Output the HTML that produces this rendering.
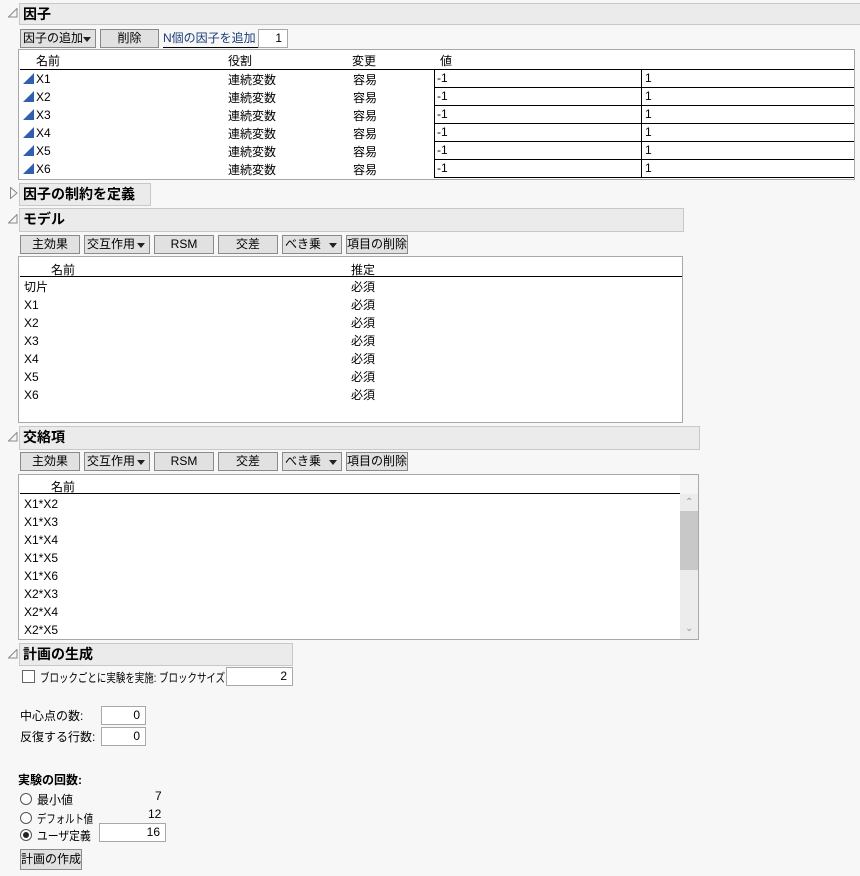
<!DOCTYPE html>
<html><head><meta charset="utf-8">
<style>
*{box-sizing:border-box;margin:0;padding:0}
body{width:860px;height:876px;background:#f7f7f7;position:relative;overflow:hidden;font-family:"Liberation Sans","Noto Sans CJK JP",sans-serif;font-size:12px;color:#000}
.a{position:absolute;white-space:nowrap}
.hdr{position:absolute;background:#ebebeb;border:1px solid #c8c8c8;font-weight:bold;font-size:14px;padding-left:3px;line-height:20px}
.btn{position:absolute;background:#e1e1e1;border:1px solid #8a8a8a;height:19px;line-height:17px;text-align:center;font-size:12px}
.btn.dd{text-align:left;padding-left:2px}
.btn.dd:after{content:"";position:absolute;right:4px;top:7px;border-left:4px solid transparent;border-right:4px solid transparent;border-top:5px solid #222}
.box{position:absolute;background:#fff;border:1px solid #a8a8a8}
.inp{position:absolute;background:#fff;border:1px solid #a8a8a8;height:19px;line-height:17px;text-align:right;padding-right:5px}
.ic{position:absolute;width:0;height:0;border-left:11px solid transparent;border-bottom:11px solid #2f5fae}
.sq{transform-origin:0 0}
</style></head><body>

<svg class="a" style="left:8px;top:8px" width="10" height="10"><path d="M9 0.5 L9 9 L0.5 9 Z" fill="none" stroke="#888"/></svg>
<div class="hdr" style="left:19px;top:3px;width:845px;height:22px">因子</div>
<div class="btn dd" style="left:20px;top:29px;width:76px">因子の追加</div>
<div class="btn" style="left:100px;top:29px;width:59px">削除</div>
<div class="a" style="left:163px;top:30px;line-height:17px;color:#1c3e7a;border-bottom:1px solid #000;width:95px">N個の因子を追加</div>
<div class="inp" style="left:258px;top:29px;width:30px">1</div>

<div class="box" style="left:18px;top:49px;width:837px;height:131px"></div>
<div class="a" style="left:36px;top:52px">名前</div>
<div class="a" style="left:228px;top:52px">役割</div>
<div class="a" style="left:352px;top:52px">変更</div>
<div class="a" style="left:440px;top:52px">値</div>
<div class="a" style="left:20px;top:69px;width:834px;height:1px;background:#000"></div>
<div class="a" style="left:434px;top:69px;width:1px;height:109px;background:#000"></div>
<div class="a" style="left:641px;top:69px;width:1px;height:109px;background:#000"></div>
<div class="a" style="left:434px;top:87px;width:420px;height:1px;background:#000"></div>
<div class="a" style="left:434px;top:105px;width:420px;height:1px;background:#000"></div>
<div class="a" style="left:434px;top:123px;width:420px;height:1px;background:#000"></div>
<div class="a" style="left:434px;top:141px;width:420px;height:1px;background:#000"></div>
<div class="a" style="left:434px;top:159px;width:420px;height:1px;background:#000"></div>
<div class="a" style="left:434px;top:177px;width:420px;height:1px;background:#000"></div>

<div class="ic" style="left:23px;top:73px"></div><div class="a" style="left:36px;top:72px">X1</div><div class="a" style="left:228px;top:71px">連続変数</div><div class="a" style="left:353px;top:71px">容易</div><div class="a" style="left:437px;top:71px">-1</div><div class="a" style="left:645px;top:71px">1</div>
<div class="ic" style="left:23px;top:91px"></div><div class="a" style="left:36px;top:90px">X2</div><div class="a" style="left:228px;top:89px">連続変数</div><div class="a" style="left:353px;top:89px">容易</div><div class="a" style="left:437px;top:89px">-1</div><div class="a" style="left:645px;top:89px">1</div>
<div class="ic" style="left:23px;top:109px"></div><div class="a" style="left:36px;top:108px">X3</div><div class="a" style="left:228px;top:107px">連続変数</div><div class="a" style="left:353px;top:107px">容易</div><div class="a" style="left:437px;top:107px">-1</div><div class="a" style="left:645px;top:107px">1</div>
<div class="ic" style="left:23px;top:127px"></div><div class="a" style="left:36px;top:126px">X4</div><div class="a" style="left:228px;top:125px">連続変数</div><div class="a" style="left:353px;top:125px">容易</div><div class="a" style="left:437px;top:125px">-1</div><div class="a" style="left:645px;top:125px">1</div>
<div class="ic" style="left:23px;top:145px"></div><div class="a" style="left:36px;top:144px">X5</div><div class="a" style="left:228px;top:143px">連続変数</div><div class="a" style="left:353px;top:143px">容易</div><div class="a" style="left:437px;top:143px">-1</div><div class="a" style="left:645px;top:143px">1</div>
<div class="ic" style="left:23px;top:163px"></div><div class="a" style="left:36px;top:162px">X6</div><div class="a" style="left:228px;top:161px">連続変数</div><div class="a" style="left:353px;top:161px">容易</div><div class="a" style="left:437px;top:161px">-1</div><div class="a" style="left:645px;top:161px">1</div>

<svg class="a" style="left:10px;top:187px" width="8" height="12"><path d="M0.5 0.5 L7 6 L0.5 11.5 Z" fill="none" stroke="#888"/></svg>
<div class="hdr" style="left:19px;top:183px;width:132px;height:23px">因子の制約を定義</div>

<svg class="a" style="left:8px;top:214px" width="10" height="10"><path d="M9 0.5 L9 9 L0.5 9 Z" fill="none" stroke="#888"/></svg>
<div class="hdr" style="left:19px;top:208px;width:665px;height:24px">モデル</div>
<div class="btn" style="left:20px;top:235px;width:60px">主効果</div>
<div class="btn dd" style="left:84px;top:235px;width:66px">交互作用</div>
<div class="btn" style="left:154px;top:235px;width:60px">RSM</div>
<div class="btn" style="left:218px;top:235px;width:60px">交差</div>
<div class="btn dd" style="left:282px;top:235px;width:60px">べき乗</div>
<div class="btn" style="left:346px;top:235px;width:62px">項目の削除</div>
<div class="box" style="left:18px;top:256px;width:665px;height:167px"></div>
<div class="a" style="left:51px;top:261px">名前</div>
<div class="a" style="left:351px;top:261px">推定</div>
<div class="a" style="left:20px;top:276px;width:662px;height:1px;background:#000"></div>
<div class="a" style="left:24px;top:278px;line-height:18px">切片<br>X1<br>X2<br>X3<br>X4<br>X5<br>X6</div>
<div class="a" style="left:351px;top:278px;line-height:18px">必須<br>必須<br>必須<br>必須<br>必須<br>必須<br>必須</div>

<svg class="a" style="left:8px;top:432px" width="10" height="10"><path d="M9 0.5 L9 9 L0.5 9 Z" fill="none" stroke="#888"/></svg>
<div class="hdr" style="left:19px;top:426px;width:681px;height:24px">交絡項</div>
<div class="btn" style="left:20px;top:452px;width:60px">主効果</div>
<div class="btn dd" style="left:84px;top:452px;width:66px">交互作用</div>
<div class="btn" style="left:154px;top:452px;width:60px">RSM</div>
<div class="btn" style="left:218px;top:452px;width:60px">交差</div>
<div class="btn dd" style="left:282px;top:452px;width:60px">べき乗</div>
<div class="btn" style="left:346px;top:452px;width:62px">項目の削除</div>
<div class="box" style="left:18px;top:474px;width:681px;height:166px;overflow:hidden">
 <div class="a" style="left:661px;top:0;width:18px;height:19px;background:#f5f5f5"></div>
 <div class="a" style="left:661px;top:19px;width:18px;height:145px;background:#ececec"></div>
 <div class="a" style="left:661px;top:36px;width:18px;height:59px;background:#c8c8c8"></div>
 <div class="a" style="left:666px;top:22px;font-size:10px;color:#999">&#8963;</div>
 <div class="a" style="left:666px;top:148px;font-size:10px;color:#999">&#8964;</div>
</div>
<div class="a" style="left:51px;top:478px">名前</div>
<div class="a" style="left:20px;top:493px;width:660px;height:1px;background:#000"></div>
<div class="a" style="left:24px;top:495px;line-height:18px">X1*X2<br>X1*X3<br>X1*X4<br>X1*X5<br>X1*X6<br>X2*X3<br>X2*X4<br>X2*X5</div>

<svg class="a" style="left:8px;top:649px" width="10" height="10"><path d="M9 0.5 L9 9 L0.5 9 Z" fill="none" stroke="#888"/></svg>
<div class="hdr" style="left:19px;top:643px;width:274px;height:23px">計画の生成</div>
<div class="a" style="left:22px;top:670px;width:13px;height:13px;border:1px solid #666;background:#fff"></div>
<div class="a sq" style="left:40px;top:669px;transform:scaleX(0.79)">ブロックごとに実験を実施: ブロックサイズ</div>
<div class="inp" style="left:226px;top:667px;width:67px">2</div>

<div class="a" style="left:20px;top:707px">中心点の数:</div>
<div class="inp" style="left:101px;top:706px;width:45px">0</div>
<div class="a" style="left:20px;top:728px">反復する行数:</div>
<div class="inp" style="left:101px;top:727px;width:45px">0</div>

<div class="a" style="left:18px;top:771px;font-weight:bold">実験の回数:</div>
<div class="a" style="left:20px;top:793px;width:12px;height:12px;border:1px solid #555;border-radius:50%;background:#fff"></div>
<div class="a" style="left:37px;top:791px">最小値</div>
<div class="a" style="left:155px;top:789px">7</div>
<div class="a" style="left:20px;top:812px;width:12px;height:12px;border:1px solid #555;border-radius:50%;background:#fff"></div>
<div class="a sq" style="left:37px;top:810px;transform:scaleX(0.78)">デフォルト値</div>
<div class="a" style="left:148px;top:807px">12</div>
<div class="a" style="left:20px;top:829px;width:12px;height:12px;border:1px solid #555;border-radius:50%;background:#fff"><div style="position:absolute;left:2px;top:2px;width:6px;height:6px;border-radius:50%;background:#222"></div></div>
<div class="a sq" style="left:37px;top:827px;transform:scaleX(0.9)">ユーザ定義</div>
<div class="inp" style="left:99px;top:823px;width:67px">16</div>
<div class="btn" style="left:20px;top:849px;width:62px;height:21px;line-height:19px">計画の作成</div>
</body></html>
